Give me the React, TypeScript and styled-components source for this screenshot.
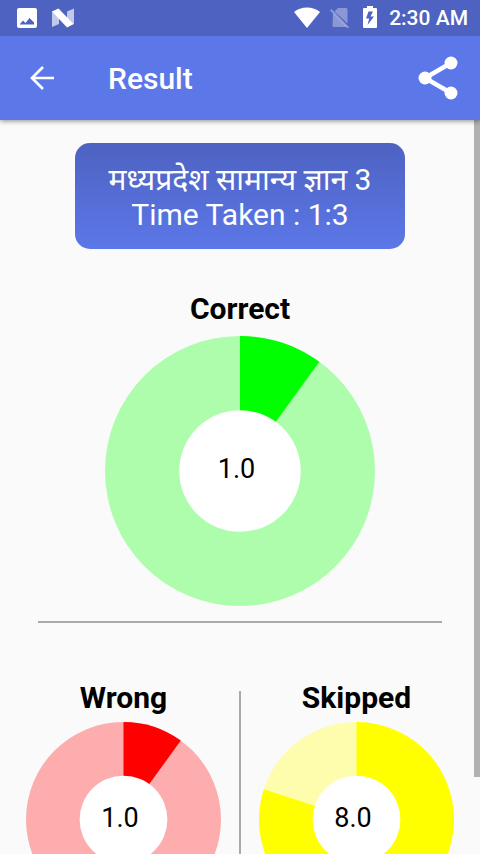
import React from "react";
import styled, { createGlobalStyle } from "styled-components";

const GlobalStyle = createGlobalStyle`
  *, *::before, *::after { box-sizing: border-box; }
  body {
    margin: 0;
    background: #fafafa;
    color: #000;
    font-family: Roboto, "Noto Sans Devanagari", "Noto Sans", sans-serif;
  }
`;

const Screen = styled.div`
  display: flex;
  flex-direction: column;
  height: 100vh;
  overflow: hidden;
`;

const StatusBar = styled.div`
  flex: none;
  display: flex;
  align-items: center;
  justify-content: space-between;
  height: 36px;
  padding: 0 12px 0 16px;
  background: #4d62c1;
  color: #fff;
`;

const StatusGroup = styled.div<{ $gap: number }>`
  display: flex;
  align-items: center;
  gap: ${(p) => p.$gap}px;
`;

const Clock = styled.time`
  padding-top: 1px;
  font-size: 21px;
  line-height: 35px;
  font-weight: 500;
`;

const Toolbar = styled.header`
  flex: none;
  display: flex;
  align-items: center;
  height: 84px;
  padding: 0 18px 0 24px;
  background: #5c77e8;
  color: #fff;
  box-shadow: 0 1px 5px rgba(0, 0, 0, 0.45);
  clip-path: inset(0 0 -8px 0);
  z-index: 1;
`;

const IconButton = styled.button`
  display: flex;
  align-items: center;
  justify-content: center;
  padding: 0;
  border: 0;
  background: none;
  color: inherit;
  cursor: pointer;
`;

const PageTitle = styled.h1`
  flex: 1;
  margin: 0 0 0 48px;
  padding-top: 2px;
  font-size: 30px;
  line-height: 36px;
  font-weight: 500;
`;

const Viewport = styled.div`
  position: relative;
  flex: 1;
  min-height: 0;
`;

const Content = styled.main`
  height: 100%;
  overflow-y: auto;
  scrollbar-width: none;
  display: flex;
  flex-direction: column;
  padding: 23px 0 24px;
`;

const ScrollThumb = styled.div`
  position: absolute;
  top: 0;
  right: 0;
  width: 6px;
  height: 89.5%;
  background: #b1b1b1;
`;

const Summary = styled.section`
  flex: none;
  margin: 0 75px 42px;
  padding: 19px 0 17px;
  border-radius: 15px;
  background: linear-gradient(#4d62c1, #5c77e8);
  color: #fff;
  text-align: center;
  font-size: 30px;
  line-height: 35px;
`;

const SummaryLine = styled.p`
  margin: 0;
  white-space: nowrap;
`;

const Stat = styled.section`
  flex: none;
  display: flex;
  flex-direction: column;
  align-items: center;
`;

const StatTitle = styled.h2<{ $gap: number }>`
  margin: 0 0 ${(p) => p.$gap}px;
  font-size: 30px;
  line-height: 35px;
  font-weight: 700;
`;

const ChartFrame = styled.div<{ $size: number }>`
  display: grid;
  place-items: center;
  width: ${(p) => p.$size}px;
  max-width: 100%;

  & > * { grid-area: 1 / 1; }
`;

const ChartSvg = styled.svg`
  display: block;
  width: 100%;
`;

const ChartValue = styled.span`
  padding: 0 7px 4px 0;
  font-size: 27px;
  line-height: 32px;
`;

const Divider = styled.hr`
  flex: none;
  height: 2px;
  margin: 15px 38px 0;
  border: 0;
  background: #aaa;
`;

const SplitRow = styled.div`
  flex: none;
  display: grid;
  grid-template-columns: 1fr 2px 1fr;
  padding: 57px 8px 0;
`;

const VerticalRule = styled.div`
  margin-top: 11px;
  background: #aaa;
`;

interface DonutProps {
  title: string;
  value: number;
  total: number;
  color: string;
  track: string;
  size: number;
  gap: number;
}

function Donut({ title, value, total, color, track, size, gap }: DonutProps) {
  const fraction = value / total;
  const angle = fraction * Math.PI * 2;
  const x = 100 + 100 * Math.sin(angle);
  const y = 100 - 100 * Math.cos(angle);
  const slice = `M100 100V0A100 100 0 ${fraction > 0.5 ? 1 : 0} 1 ${x} ${y}Z`;
  return (
    <Stat>
      <StatTitle $gap={gap}>{title}</StatTitle>
      <ChartFrame $size={size}>
        <ChartSvg viewBox="0 0 200 200" aria-hidden="true">
          <circle cx="100" cy="100" r="100" fill={track} />
          <path d={slice} fill={color} />
          <circle cx="100" cy="100" r="45" fill="#fff" />
        </ChartSvg>
        <ChartValue>{value.toFixed(1)}</ChartValue>
      </ChartFrame>
    </Stat>
  );
}

const ImageIcon = () => (
  <svg width="22" height="22" viewBox="0 0 22 22" aria-hidden="true">
    <path
      fill="#fff"
      fillRule="evenodd"
      d="M3 1h16a2 2 0 0 1 2 2v16a2 2 0 0 1-2 2H3a2 2 0 0 1-2-2V3a2 2 0 0 1 2-2ZM4 17.500h14v-2l-4.500-4.500-4 5-2.500-2.500-3 3.500Z"
    />
  </svg>
);

const NougatIcon = () => (
  <svg width="24" height="22" viewBox="0 0 24 22" aria-hidden="true">
    <path fill="#fff" fillOpacity=".65" d="M1 4.500l7-2.500v15l-7 3zM16 4.500l7-3v15.500l-7 3z" />
    <path fill="#fff" d="M1 4.500l6.500-3L22.500 17 16 20.500z" />
  </svg>
);

const WifiIcon = () => (
  <svg width="26" height="22" viewBox="0 0 26 22" aria-hidden="true">
    <path fill="#fff" d="M13 21 0 5C3.500 2 8 .5 13 .5S22.500 2 26 5z" />
  </svg>
);

const NoSimIcon = () => (
  <svg width="20" height="22" viewBox="0 0 20 22" aria-hidden="true">
    <g fill="#fff" fillOpacity=".35">
      <path d="M8 1h8a1.500 1.500 0 0 1 1.500 1.500v14L4.500 4.500z" />
      <path d="M3 6l14 14H4a1.500 1.500 0 0 1-1.500-1.500z" />
      <path d="M1.500 2 0 3.500 17.500 21.500 19 20z" />
    </g>
  </svg>
);

const BatteryIcon = () => (
  <svg width="14" height="24" viewBox="0 0 14 24" aria-hidden="true">
    <path
      fill="#fff"
      fillRule="evenodd"
      d="M4 0h6v2h3a1 1 0 0 1 1 1v18a1 1 0 0 1-1 1H1a1 1 0 0 1-1-1V3a1 1 0 0 1 1-1h3ZM5.500 5.500 3 12.500h3.200L4.500 19 11 10.500H7.500L10 5.500Z"
    />
  </svg>
);

const BackIcon = () => (
  <svg width="36" height="36" viewBox="0 0 36 36" aria-hidden="true">
    <path d="M30 18H8M19 7 8 18l11 11" fill="none" stroke="#fff" strokeWidth="2.700" />
  </svg>
);

const ShareIcon = () => (
  <svg width="48" height="48" viewBox="0 0 48 48" aria-hidden="true">
    <path d="M37 9 11 24l26 15" fill="none" stroke="#fff" strokeWidth="4.500" />
    <g fill="#fff">
      <circle cx="37" cy="9" r="6.500" />
      <circle cx="11" cy="24" r="6.500" />
      <circle cx="37" cy="39" r="6.500" />
    </g>
  </svg>
);

export default function App() {
  return (
    <>
      <GlobalStyle />
      <Screen>
        <StatusBar>
          <StatusGroup $gap={13}>
            <ImageIcon />
            <NougatIcon />
          </StatusGroup>
          <StatusGroup $gap={12}>
            <StatusGroup $gap={10}>
              <WifiIcon />
              <StatusGroup $gap={13}>
                <NoSimIcon />
                <BatteryIcon />
              </StatusGroup>
            </StatusGroup>
            <Clock>2:30 AM</Clock>
          </StatusGroup>
        </StatusBar>
        <Toolbar>
          <IconButton type="button" aria-label="Back">
            <BackIcon />
          </IconButton>
          <PageTitle>Result</PageTitle>
          <IconButton type="button" aria-label="Share">
            <ShareIcon />
          </IconButton>
        </Toolbar>
        <Viewport>
          <Content>
            <Summary>
              <SummaryLine lang="hi">मध्यप्रदेश सामान्य ज्ञान 3</SummaryLine>
              <SummaryLine>Time Taken : 1:3</SummaryLine>
            </Summary>
            <Donut title="Correct" value={1} total={10} color="#00ff00" track="#adfdad" size={270} gap={10} />
            <Divider />
            <SplitRow>
              <Donut title="Wrong" value={1} total={10} color="#ff0000" track="#fdadad" size={195} gap={7} />
              <VerticalRule />
              <Donut title="Skipped" value={8} total={10} color="#ffff00" track="#fdfdad" size={195} gap={7} />
            </SplitRow>
          </Content>
          <ScrollThumb />
        </Viewport>
      </Screen>
    </>
  );
}
